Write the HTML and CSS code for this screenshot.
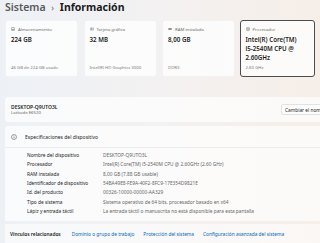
FILE: index.html
```html
<!DOCTYPE html>
<html lang="es">
<head>
    <meta charset="UTF-8">
    <meta name="viewport" content="width=device-width, initial-scale=1.0">
    <title>Sistema - Información</title>
    <link rel="stylesheet" href="styles.css">
</head>
<body>
    <div class="page">
        <h1 class="title">
            <span class="title__parent">Sistema</span>
            <span class="title__chevron">&#8250;</span>
            <span class="title__current">Información</span>
        </h1>

        <div class="cards">
            <div class="card">
                <div class="card__label">
                    <svg class="card__icon" viewBox="0 0 10 10"><rect x="1.5" y="1" width="7" height="8" rx="1" fill="none" stroke="#6b6b6b" stroke-width="1.2"/><rect x="3" y="5.5" width="4" height="2" fill="#6b6b6b"/></svg>
                    Almacenamiento
                </div>
                <div class="card__value">224 GB</div>
                <div class="card__foot">46 GB de 224 GB usado</div>
            </div>
            <div class="card">
                <div class="card__label">
                    <svg class="card__icon" viewBox="0 0 10 10"><rect x="0.8" y="2.5" width="8.4" height="5" rx="0.6" fill="none" stroke="#6b6b6b" stroke-width="1.2"/><rect x="2.5" y="4" width="3" height="2" fill="#6b6b6b"/></svg>
                    Tarjeta gráfica
                </div>
                <div class="card__value">32 MB</div>
                <div class="card__foot">Intel(R) HD Graphics 3000</div>
            </div>
            <div class="card">
                <div class="card__label">
                    <svg class="card__icon" viewBox="0 0 10 10"><rect x="0.8" y="3.2" width="8.4" height="3.6" fill="#6b6b6b"/></svg>
                    RAM instalada
                </div>
                <div class="card__value">8,00 GB</div>
                <div class="card__foot">DDR3</div>
            </div>
            <div class="card card--selected">
                <div class="card__label">
                    <svg class="card__icon" viewBox="0 0 10 10"><rect x="1.5" y="1.5" width="7" height="7" rx="0.8" fill="none" stroke="#6b6b6b" stroke-width="1.2"/><rect x="3.5" y="3.5" width="3" height="3" fill="#6b6b6b"/></svg>
                    Procesador
                </div>
                <div class="card__value card__value--multi">Intel(R) Core(TM) i5-2540M CPU @ 2.60GHz</div>
                <div class="card__foot">2.60 GHz</div>
            </div>
        </div>

        <div class="device">
            <div class="device__info">
                <div class="device__name">DESKTOP-Q9UTO3L</div>
                <div class="device__model">Latitude E6520</div>
            </div>
            <button class="device__rename">Cambiar el nombre de este equipo</button>
        </div>

        <div class="specs">
            <div class="specs__head">
                <svg class="specs__icon" viewBox="0 0 12 12"><circle cx="6" cy="6" r="5" fill="none" stroke="#333" stroke-width="0.9"/><rect x="5.5" y="5" width="1" height="3.6" fill="#333"/><circle cx="6" cy="3.6" r="0.6" fill="#333"/></svg>
                Especificaciones del dispositivo
            </div>
            <div class="specs__rows">
                <div class="specs__row"><span class="specs__key">Nombre del dispositivo</span><span class="specs__val">DESKTOP-Q9UTO3L</span></div>
                <div class="specs__row"><span class="specs__key">Procesador</span><span class="specs__val">Intel(R) Core(TM) i5-2540M CPU @ 2.60GHz (2.60 GHz)</span></div>
                <div class="specs__row"><span class="specs__key">RAM instalada</span><span class="specs__val">8,00 GB (7,88 GB usable)</span></div>
                <div class="specs__row"><span class="specs__key">Identificador de dispositivo</span><span class="specs__val">54BA49E8-FE9A-40F2-8FC9-17E354D9821E</span></div>
                <div class="specs__row"><span class="specs__key">Id. del producto</span><span class="specs__val">00326-10000-00000-AA329</span></div>
                <div class="specs__row"><span class="specs__key">Tipo de sistema</span><span class="specs__val">Sistema operativo de 64 bits, procesador basado en x64</span></div>
                <div class="specs__row"><span class="specs__key">Lápiz y entrada táctil</span><span class="specs__val">La entrada táctil o manuscrita no está disponible para esta pantalla</span></div>
            </div>
        </div>

        <div class="links">
            <span class="links__title">Vínculos relacionados</span>
            <a class="links__item" href="#">Dominio o grupo de trabajo</a>
            <a class="links__item" href="#">Protección del sistema</a>
            <a class="links__item" href="#">Configuración avanzada del sistema</a>
        </div>
    </div>
</body>
</html>
```

FILE: styles.css
```css
* {
    box-sizing: border-box;
    margin: 0;
    padding: 0;
}

body {
    width: 320px;
    height: 243px;
    overflow: hidden;
    background: linear-gradient(90deg, #edf1f6 0%, #f3f1f1 50%, #f6eee8 100%);
    font-family: 'Segoe UI', 'Noto Sans', sans-serif;
    color: #1b1b1b;
}

.page {
    width: 345px;
    padding-left: 5px;
}

.title {
    font-size: 10.5px;
    line-height: 14px;
    font-weight: 600;
    height: 14px;
    white-space: nowrap;
}

.title__parent {
    color: #5a5a5a;
}

.title__chevron {
    color: #8a8a8a;
    font-size: 8px;
    margin: 0 3px;
}

.title__current {
    font-weight: 700;
}

.cards {
    display: grid;
    grid-template-columns: repeat(4, 73px);
    column-gap: 5.5px;
    margin-top: 6px;
}

.card {
    height: 57px;
    background-color: rgba(255, 255, 255, 0.75);
    border: 1px solid rgba(0, 0, 0, 0.04);
    border-radius: 3px;
    padding: 5px 5px 0;
    display: flex;
    flex-direction: column;
}

.card--selected {
    border: 1px solid #4d4d4d;
    width: 75px;
    margin-left: -1px;
}

.card__label {
    display: flex;
    align-items: center;
    gap: 3px;
    font-size: 4.3px;
    line-height: 6px;
    color: #6b6b6b;
}

.card__icon {
    width: 4px;
    height: 4px;
}

.card__value {
    margin-top: 3px;
    font-size: 6.2px;
    line-height: 9px;
    font-weight: 600;
}

.card__value--multi {
    width: 58px;
}

.card__foot {
    margin-top: auto;
    margin-bottom: 6px;
    font-size: 4.3px;
    line-height: 6px;
    color: #7a7a7a;
}

.device {
    display: flex;
    align-items: center;
    justify-content: space-between;
    height: 25px;
    margin-top: 20px;
    padding-left: 6px;
    background-color: rgba(255, 255, 255, 0.7);
    border-radius: 3px;
}

.device__name {
    font-size: 5px;
    line-height: 6px;
    font-weight: 600;
}

.device__model {
    font-size: 4.3px;
    line-height: 5px;
    color: #666;
}

.device__rename {
    width: 58px;
    height: 11px;
    margin-right: 6px;
    padding-left: 3px;
    background-color: #fdfdfd;
    border: 1px solid #e2e2e2;
    border-radius: 2px;
    font-family: inherit;
    font-size: 4.8px;
    color: #1b1b1b;
    text-align: left;
    white-space: nowrap;
    overflow: hidden;
}

.specs {
    margin-top: 4px;
    background-color: rgba(255, 255, 255, 0.7);
    border-radius: 3px 3px 0 0;
}

.specs__head {
    display: flex;
    align-items: center;
    gap: 8px;
    height: 22px;
    padding-left: 6px;
    font-size: 5px;
    border-bottom: 1px solid #ececec;
}

.specs__icon {
    width: 6px;
    height: 6px;
}

.specs__rows {
    padding: 3px 0 5px;
}

.specs__row {
    display: grid;
    grid-template-columns: 76px 1fr;
    padding-left: 22px;
    font-size: 4.8px;
    line-height: 9.35px;
    white-space: nowrap;
}

.specs__val {
    color: #666;
}

.links {
    display: flex;
    align-items: center;
    gap: 9px;
    height: 19px;
    margin-top: 3px;
    padding-left: 5px;
    background-color: rgba(255, 255, 255, 0.55);
    font-size: 4.8px;
    white-space: nowrap;
}

.links__title {
    font-weight: 600;
    margin-right: 2px;
}

.links__item {
    color: #0067c0;
    text-decoration: none;
}
```
